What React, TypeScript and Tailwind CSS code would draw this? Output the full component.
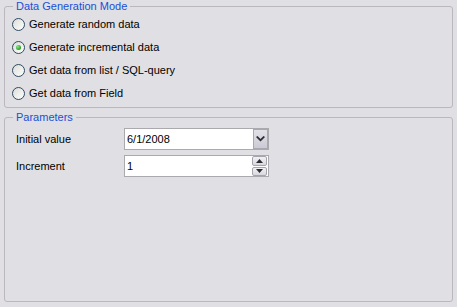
import React from "react";

const modes = [
  { id: "random", label: "Generate random data" },
  { id: "incremental", label: "Generate incremental data" },
  { id: "list", label: "Get data from list / SQL-query" },
  { id: "field", label: "Get data from Field" },
];

function Radio({ checked }: { checked?: boolean }) {
  return (
    <span className="w-[13px] h-[13px] rounded-full border border-[#2f4a63] bg-gradient-to-br from-[#dcdcd6] to-white flex items-center justify-center shrink-0">
      {checked && (
        <span className="w-[5px] h-[5px] rounded-full bg-[radial-gradient(circle_at_35%_35%,#8ee58e,#21a121_70%)]" />
      )}
    </span>
  );
}

function Chevron() {
  return (
    <svg width="9" height="6" viewBox="0 0 9 6">
      <path d="M0 1 L1.5 0 L4.5 3 L7.5 0 L9 1 L4.5 5.5 Z" fill="#2b2b33" />
    </svg>
  );
}

function Triangle({ up }: { up?: boolean }) {
  return (
    <svg width="7" height="4" viewBox="0 0 7 4">
      <path d={up ? "M0 4 L3.5 0 L7 4 Z" : "M0 0 L3.5 4 L7 0 Z"} fill="#2b2b33" />
    </svg>
  );
}

export default function App() {
  const selected = "incremental";

  return (
    <div
      className="w-[457px] h-[307px] bg-[#e0dfe3] pl-[4px] pr-[4px] text-[11px] leading-[13px] text-black"
      style={{ fontFamily: '"Liberation Sans", Arial, sans-serif' }}
    >
      {/* Data Generation Mode */}
      <fieldset className="border border-[#bcb7be] rounded-[3px] p-0 m-0 pb-[2px]">
        <legend className="ml-[8px] px-[3px] text-[#1a4fd8]">Data Generation Mode</legend>
        <div className="pl-[7px]">
          {modes.map((m) => (
            <div key={m.id} className="h-[23px] flex items-center gap-[4px]">
              <Radio checked={selected === m.id} />
              <span>{m.label}</span>
            </div>
          ))}
        </div>
      </fieldset>

      {/* Parameters */}
      <fieldset className="border border-[#bcb7be] rounded-[3px] p-0 m-0 mt-[3px] h-[191px]">
        <legend className="ml-[8px] px-[3px] text-[#1a4fd8]">Parameters</legend>
        <div className="pl-[11px] pt-[4px] flex flex-col gap-[5px]">
          <div className="flex items-center">
            <span className="w-[108px]">Initial value</span>
            <div className="w-[145px] h-[22px] border border-[#a9a9ae] bg-white flex items-center">
              <span className="flex-1 pl-[2px]">6/1/2008</span>
              <div className="w-[15px] h-[20px] border border-[#a9a8b2] bg-gradient-to-b from-[#e2e1e8] to-[#cccbd5] flex items-center justify-center">
                <Chevron />
              </div>
            </div>
          </div>
          <div className="flex items-center">
            <span className="w-[108px]">Increment</span>
            <div className="w-[145px] h-[22px] border border-[#a9a9ae] bg-white flex items-center">
              <span className="flex-1 pl-[2px]">1</span>
              <div className="w-[15px] h-[20px] flex flex-col gap-[1px] mr-[1px]">
                <div className="flex-1 rounded-[2px] border border-[#a6a5ad] bg-gradient-to-b from-[#f2f2f5] to-[#d8d7de] flex items-center justify-center">
                  <Triangle up />
                </div>
                <div className="flex-1 rounded-[2px] border border-[#a6a5ad] bg-gradient-to-b from-[#f2f2f5] to-[#d8d7de] flex items-center justify-center">
                  <Triangle />
                </div>
              </div>
            </div>
          </div>
        </div>
      </fieldset>
    </div>
  );
}
